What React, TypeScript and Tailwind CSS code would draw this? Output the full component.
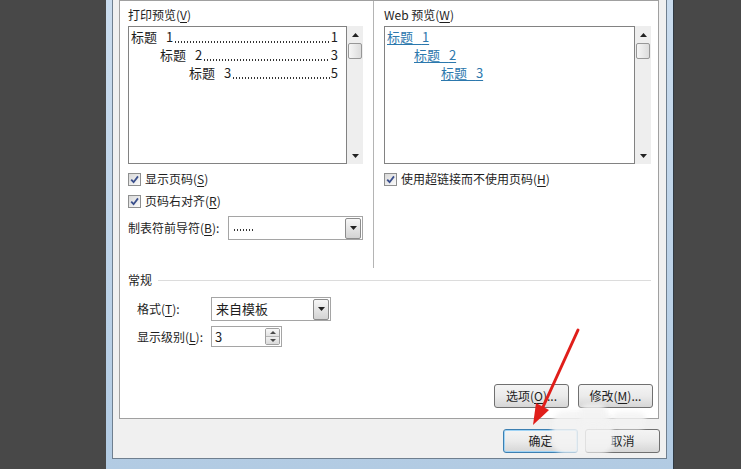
import type { ReactNode } from "react";

function Key({ k }: { k: string }) {
  return <span className="underline underline-offset-2">{k}</span>;
}

function Check() {
  return (
    <span className="flex h-[13px] w-[13px] shrink-0 items-center justify-center border border-[#8e8f8f] bg-linear-to-br from-[#d8d8d8] to-[#fbfbfb]">
      <svg width="9" height="9" viewBox="0 0 9 9">
        <path d="M1.2 4.6 L3.6 7.2 L8 1.4" stroke="#3a4f8c" strokeWidth="1.8" fill="none" />
      </svg>
    </span>
  );
}

function Arrow({ up }: { up?: boolean }) {
  return (
    <svg width="7" height="4" viewBox="0 0 7 4">
      <path d={up ? "M0 4 L3.5 0 L7 4 Z" : "M0 0 L3.5 4 L7 0 Z"} fill="#222" />
    </svg>
  );
}

function Scrollbar() {
  return (
    <div className="flex h-[138px] w-[16px] shrink-0 flex-col items-center bg-[#eeeeee]">
      <div className="mt-[7px]">
        <Arrow up />
      </div>
      <div className="mt-[6px] h-[16px] w-[14px] rounded-[2px] border border-[#979797] bg-linear-to-r from-[#f6f6f6] to-[#dcdcdc]" />
      <div className="mt-auto mb-[6px]">
        <Arrow />
      </div>
    </div>
  );
}

function DropButton() {
  return (
    <div className="mr-px flex h-[21px] w-[16px] items-center justify-center rounded-[2px] border border-[#8c8c8c] bg-linear-to-b from-[#f7f7f7] to-[#d3d3d3]">
      <Arrow />
    </div>
  );
}

function Leader({ num, page, indent }: { num: string; page: string; indent: string }) {
  return (
    <div className={`flex h-[18px] items-center pr-[8px] ${indent}`}>
      <span className="[word-spacing:6px]">标题 {num}</span>
      <span className="mx-px mt-[9px] h-[2px] flex-1 self-center bg-[radial-gradient(circle,#333_0.7px,transparent_1px)] bg-[length:3px_2px] bg-repeat-x" />
      <span>{page}</span>
    </div>
  );
}

function WebLink({ num, indent }: { num: string; indent: string }) {
  return (
    <div className={`flex h-[18px] items-center ${indent}`}>
      <span className="text-[#2c78ad] underline underline-offset-2 [word-spacing:6px]">标题 {num}</span>
    </div>
  );
}

function CheckRow({ children }: { children: ReactNode }) {
  return (
    <div className="flex h-[16px] items-center gap-[4px]">
      <Check />
      <span>{children}</span>
    </div>
  );
}

function Button({ children, primary }: { children: ReactNode; primary?: boolean }) {
  return (
    <div
      className={`flex h-[24px] w-[75px] items-center justify-center rounded-[3px] border bg-linear-to-b from-[#f4f4f4] via-[#ebebeb] to-[#d6d6d6] ${
        primary ? "border-[#3c7fb1] shadow-[inset_0_0_0_1px_#9fd3f5]" : "border-[#707070]"
      }`}
    >
      {children}
    </div>
  );
}

export default function App() {
  return (
    <div className="relative flex h-[469px] w-[741px] overflow-hidden bg-[#484848] font-['Noto_Sans_CJK_SC',sans-serif] text-[12px] leading-[16px] text-[#1e1e1e]">
      <div className="w-[106px] shrink-0" />

      {/* window frame */}
      <div className="flex h-[469px] w-[568px] shrink-0 flex-col border-r border-[#2f3a44] bg-linear-to-b from-[#cadcee] to-[#b2cbe3] px-[6px]">
        <div className="flex h-[459px] flex-col border-x border-b border-[#6f7f8f] bg-[#f0f0f0] pl-[6px] pr-[6px]">
          {/* white panel */}
          <div className="flex h-[419px] w-[540px] flex-col border border-[#a0a0a0] bg-white">
            <div className="flex h-[268px]">
              {/* print preview */}
              <div className="flex w-[244px] shrink-0 flex-col pl-[8px]">
                <div className="mt-[6px]">
                  打印预览(<Key k="V" />)
                </div>
                <div className="mt-[3px] flex">
                  <div className="h-[138px] w-[219px] border border-[#828282] pt-[1px] pl-[2px] text-[13px]">
                    <Leader num="1" page="1" indent="" />
                    <Leader num="2" page="3" indent="pl-[29px]" />
                    <Leader num="3" page="5" indent="pl-[58px]" />
                  </div>
                  <Scrollbar />
                </div>
                <div className="mt-[7px]">
                  <CheckRow>
                    显示页码(<Key k="S" />)
                  </CheckRow>
                </div>
                <div className="mt-[6px]">
                  <CheckRow>
                    页码右对齐(<Key k="R" />)
                  </CheckRow>
                </div>
                <div className="mt-[7px] flex items-center">
                  <span className="w-[100px]">
                    制表符前导符(<Key k="B" />):
                  </span>
                  <div className="flex h-[24px] w-[135px] items-center border border-[#a5a5a5] bg-white">
                    <span className="ml-[4px] mt-[3px] h-[2px] w-[20px] bg-[radial-gradient(circle,#333_0.7px,transparent_1px)] bg-[length:3px_2px] bg-repeat-x" />
                    <div className="ml-auto">
                      <DropButton />
                    </div>
                  </div>
                </div>
              </div>

              <div className="ml-[9px] h-[267px] w-px bg-[#b4b4b4]" />

              {/* web preview */}
              <div className="flex flex-1 flex-col pl-[10px]">
                <div className="mt-[6px]">
                  Web 预览(<Key k="W" />)
                </div>
                <div className="mt-[3px] flex">
                  <div className="h-[138px] w-[251px] border border-[#828282] pt-[1px] pl-[2px] text-[13px]">
                    <WebLink num="1" indent="" />
                    <WebLink num="2" indent="pl-[27px]" />
                    <WebLink num="3" indent="pl-[54px]" />
                  </div>
                  <Scrollbar />
                </div>
                <div className="mt-[7px]">
                  <CheckRow>
                    使用超链接而不使用页码(<Key k="H" />)
                  </CheckRow>
                </div>
              </div>
            </div>

            {/* general */}
            <div className="mt-[3px] flex items-center pl-[8px] pr-[7px]">
              <span>常规</span>
              <div className="ml-[6px] h-px flex-1 bg-[#dcdcdc]" />
            </div>
            <div className="mt-[9px] flex items-center pl-[17px]">
              <span className="w-[74px]">
                格式(<Key k="T" />):
              </span>
              <div className="flex h-[24px] w-[120px] items-center border border-[#a5a5a5] bg-white">
                <span className="pl-[4px] text-[13px]">来自模板</span>
                <div className="ml-auto">
                  <DropButton />
                </div>
              </div>
            </div>
            <div className="mt-[5px] flex items-center pl-[17px]">
              <span className="w-[74px]">
                显示级别(<Key k="L" />):
              </span>
              <div className="flex h-[21px] w-[71px] items-center border border-[#a5a5a5] bg-white">
                <span className="pl-[3px] text-[13px]">3</span>
                <div className="ml-auto mr-px flex h-[17px] w-[15px] flex-col overflow-hidden rounded-[2px] border border-[#a0a0a0]">
                  <div className="flex flex-1 items-center justify-center border-b border-[#b5b5b5] bg-linear-to-b from-[#f8f8f8] to-[#e2e2e2]">
                    <svg width="6" height="3" viewBox="0 0 6 3">
                      <path d="M0 3 L3 0 L6 3 Z" fill="#4a4a4a" />
                    </svg>
                  </div>
                  <div className="flex flex-1 items-center justify-center bg-linear-to-b from-[#f0f0f0] to-[#dadada]">
                    <svg width="6" height="3" viewBox="0 0 6 3">
                      <path d="M0 0 L3 3 L6 0 Z" fill="#4a4a4a" />
                    </svg>
                  </div>
                </div>
              </div>
            </div>

            <div className="mt-auto mb-[10px] flex justify-end gap-[10px] pr-[6px]">
              <div className="w-[74px]">
                <Button>
                  选项(<Key k="O" />)...
                </Button>
              </div>
              <div className="w-[74px]">
                <Button>
                  修改(<Key k="M" />)...
                </Button>
              </div>
            </div>
          </div>

          {/* dialog buttons */}
          <div className="mt-[10px] flex justify-end gap-[7px]">
            <Button primary>确定</Button>
            <Button>取消</Button>
          </div>
        </div>
      </div>

      {/* watermark smudge */}
      <div className="pointer-events-none absolute left-[552px] top-[411px] h-[43px] w-[62px] rounded-[14px] bg-[#f3f3f3]/85 blur-[2px]" />
      <div className="pointer-events-none absolute left-[580px] top-[404px] h-[22px] w-[26px] rounded-[8px] bg-[#f3f3f3]/80 blur-[2px]" />
      <div className="pointer-events-none absolute left-[612px] top-[412px] h-[18px] w-[34px] rounded-[8px] bg-[#f3f3f3]/80 blur-[2px]" />

      {/* red arrow */}
      <svg className="pointer-events-none absolute left-0 top-0" width="741" height="469" viewBox="0 0 741 469">
        <path d="M578 330 L543 407" stroke="#e01e1a" strokeWidth="3" strokeLinecap="round" />
        <path d="M533 425 L536 403 L549 410 Z" fill="#e01e1a" />
      </svg>
    </div>
  );
}
